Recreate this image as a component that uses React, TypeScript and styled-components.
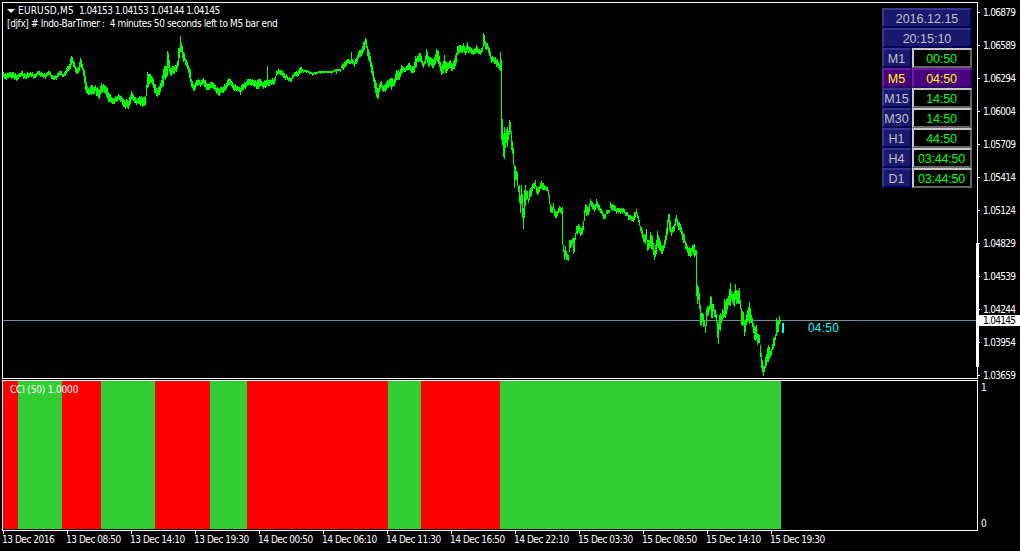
import React from "react";
import styled, { createGlobalStyle } from "styled-components";

const Global = createGlobalStyle`
  * { box-sizing: border-box; }
  html, body { margin: 0; padding: 0; background: #000; }
`;

const Terminal = styled.main`
  width: 1020px;
  height: 551px;
  padding: 2px 0 0 2px;
  display: grid;
  grid-template-columns: 976px 42px;
  grid-template-rows: 377px 151px 20px;
  row-gap: 1px;
  overflow: hidden;
  background: #000;
  color: #fff;
  font-family: "DejaVu Sans Condensed", "DejaVu Sans", sans-serif;
  font-stretch: condensed;
  font-size: 10px;
  line-height: 13px;
  letter-spacing: -0.7px;
  white-space: nowrap;
`;

const Pane = styled.section`
  position: relative;
  border: 1px solid #fff;
  overflow: hidden;
`;

const Drawing = styled.svg`
  position: absolute;
  left: -3px;
  top: -3px;
  display: block;
`;

const Header = styled.header`
  position: relative;
  padding: 1px 0 0 4px;
`;

const TitleRow = styled.div`
  display: flex;
  align-items: center;
  height: 13px;
  letter-spacing: -0.54px;
`;

const Marker = styled.span`
  width: 0;
  height: 0;
  border: 4px solid transparent;
  border-top-color: #fff;
  border-bottom: 0;
  margin-right: 3px;
`;

const Symbol = styled.span`
  width: 61px;
  letter-spacing: 0.2px;
`;

const Message = styled.div`
  height: 13px;
  letter-spacing: -0.37px;
  white-space: pre;
`;

const Countdown = styled.span`
  position: absolute;
  left: 805px;
  top: 317px;
  color: #00ffff;
  font: 12px/16px "Liberation Sans", Arial, sans-serif;
  letter-spacing: 0.2px;
`;

const TimerPanel = styled.aside`
  position: absolute;
  left: 879px;
  top: 5px;
  width: 90px;
  display: flex;
  flex-direction: column;
  font: 12.5px/16px "Liberation Sans", Arial, sans-serif;
  letter-spacing: 0;
`;

const TimerRow = styled.div`
  display: flex;
  height: 20px;
`;

type Tone = "navy" | "active" | "value";
const tones: Record<Tone, { bg: string; light: string; dark: string; text: string }> = {
  navy: { bg: "#191970", light: "#37378e", dark: "#000052", text: "#c0c0c0" },
  active: { bg: "#4b0082", light: "#691ea0", dark: "#2d0064", text: "#ffff00" },
  value: { bg: "#000", light: "#c8c8c8", dark: "#646464", text: "#00ff00" },
};

const Cell = styled.div<{ $w: number; $tone: Tone }>`
  width: ${(p) => p.$w}px;
  height: 20px;
  display: flex;
  justify-content: center;
  align-items: center;
  padding: ${(p) => (p.$w === 90 ? "1px 0 0" : "1px 1px 0 0")};
  border: 2px solid;
  border-color: ${({ $tone }) => {
    const t = tones[$tone];
    return `${t.light} ${t.dark} ${t.dark} ${t.light}`;
  }};
  background: ${(p) => tones[p.$tone].bg};
  color: ${(p) => tones[p.$tone].text};
  letter-spacing: ${(p) => (p.$w === 60 ? "-0.2px" : "0")};
`;

const PriceAxis = styled.div`
  position: relative;
  display: flex;
  flex-direction: column;
  padding-top: 4px;
`;

const AxisLabel = styled.div`
  display: flex;
  align-items: center;
  flex: none;
  height: 33px;
  padding-bottom: 20px;
  &::before {
    content: "";
    width: 2px;
    height: 1px;
    margin-right: 3px;
    background: #fff;
  }
`;

const CurrentPrice = styled.div`
  position: absolute;
  left: 1px;
  top: 313px;
  width: 41px;
  height: 11px;
  padding-left: 4px;
  line-height: 12px;
  background: #fff;
  color: #000;
`;

const RangeBar = styled.div`
  position: absolute;
  left: -2px;
  top: 241px;
  width: 3px;
  height: 124px;
  background: #fff;
`;

const Bars = styled.div`
  display: flex;
  height: 148px;
`;

const Band = styled.div<{ $w: number; $up: boolean }>`
  width: ${(p) => p.$w}px;
  background: ${(p) => (p.$up ? "#32cd32" : "#ff0000")};
`;

const IndicatorName = styled.span`
  position: absolute;
  left: 7px;
  top: 2px;
  letter-spacing: -0.18px;
`;

const IndicatorAxis = styled.div`
  display: flex;
  flex-direction: column;
  justify-content: space-between;
  padding: 1px 0 1px 3px;
`;

const TimeAxis = styled.footer`
  grid-column: 1 / 3;
  display: flex;
  margin-top: -1px;
`;

const TimeLabel = styled.div`
  width: 64px;
  flex: none;
  line-height: 12px;
  letter-spacing: -0.47px;
  &::before {
    content: "";
    display: block;
    width: 1px;
    height: 3px;
    margin: 0 0 0 1px;
    background: #fff;
  }
`;

const prices = ["1.06879", "1.06589", "1.06294", "1.06004", "1.05709", "1.05414", "1.05124", "1.04829", "1.04539", "1.04244", "1.03954", "1.03659"];

const times = [
  "13 Dec 2016", "13 Dec 08:50", "13 Dec 14:10", "13 Dec 19:30", "14 Dec 00:50", "14 Dec 06:10", "14 Dec 11:30",
  "14 Dec 16:50", "14 Dec 22:10", "15 Dec 03:30", "15 Dec 08:50", "15 Dec 14:10", "15 Dec 19:30",
];

const timers: [string, string][] = [
  ["M1", "00:50"], ["M5", "04:50"], ["M15", "14:50"], ["M30", "14:50"], ["H1", "44:50"], ["H4", "03:44:50"], ["D1", "03:44:50"],
];

const bands: [number, boolean][] = [
  [15, false], [44, true], [39, false], [54, true], [55, false], [37, true], [141, false], [33, true], [79, false], [281, true],
];

// Price envelope: "x,high,low" in chart pixels.
const envelope = `3,72,77 5,73,79 8,73,78 12,72,78 15,73,79 18,74,79 20,73,77 22,71,76 25,74,79 28,73,78 30,72,76 34,74,78
37,71,75 40,73,77 44,73,77 48,71,75 50,72,76 52,75,79 54,76,80 57,73,77 61,71,75 63,74,77 66,68,74 68,66,71 69,64,70 70,58,69
71,56,65 72,57,63 74,62,68 76,68,74 78,67,73 79,62,71 80,58,67 82,64,70 83,68,76 84,70,83 85,76,90 87,86,94 89,89,95 91,85,95
93,87,94 95,85,91 97,87,96 99,90,99 101,83,92 103,84,91 105,86,94 107,88,99 109,94,102 112,98,104 115,96,101 119,95,100
122,98,105 126,99,107 128,101,109 130,95,104 131,91,100 132,93,99 134,97,103 137,98,103 140,97,106 143,97,106 145,96,105
146,85,96 147,72,88 149,74,84 151,76,83 153,79,88 155,84,93 157,90,97 159,86,95 161,80,88 163,69,86 164,66,78 165,66,80
166,66,78 167,51,76 168,53,68 169,60,73 170,68,75 173,66,74 175,65,71 177,61,69 178,48,66 179,48,58 180,36,52 181,43,52
182,46,58 184,53,61 186,60,66 188,65,73 190,70,82 191,79,87 193,84,91 196,80,86 198,79,85 200,82,87 203,78,84 205,80,87
207,84,90 209,84,90 211,82,88 214,84,90 217,87,93 219,89,96 221,87,92 224,84,91 226,83,89 228,78,86 230,79,84 232,82,88
235,84,90 238,87,91 240,88,95 242,84,90 244,82,88 247,79,85 251,80,86 255,80,86 258,79,89 261,81,86 264,80,87 266,80,87
267,66,85 268,80,86 271,80,85 274,78,84 276,71,76 279,70,74 281,70,75 284,73,78 286,74,78 288,78,81 290,78,82 292,75,79
294,72,76 296,71,76 298,70,76 301,67,73 303,70,73 306,70,73 309,71,74 312,73,76 315,72,75 320,71,74 326,71,73 331,71,74
336,69,74 340,69,72 342,63,69 345,61,67 348,59,63 350,61,64 351,52,63 352,59,64 353,60,65 355,59,64 357,55,62 359,50,57
361,49,56 363,42,52 365,38,45 366,39,48 367,46,56 370,56,67 372,65,76 374,77,88 376,83,97 377,88,99 378,88,98 379,84,92
381,81,87 383,86,92 386,82,90 389,79,86 391,78,90 393,80,86 396,70,80 399,72,80 401,65,74 403,67,71 406,66,70 408,63,70
410,65,71 412,66,73 413,66,73 415,56,68 417,56,62 420,53,62 422,61,66 424,61,65 426,49,60 428,56,67 430,57,64 432,59,68
434,57,66 436,49,60 438,51,64 440,62,71 441,66,75 442,64,74 444,55,69 446,62,73 448,63,69 450,60,68 452,64,71 455,55,66
457,46,55 459,45,53 461,46,53 463,43,51 465,48,55 467,42,50 469,47,53 472,49,54 474,49,54 476,45,52 478,49,54 480,50,55
482,47,52 483,33,47 484,35,45 485,41,49 487,43,49 489,48,56 491,57,63 493,57,62 495,57,64 497,59,66 499,64,70 500,52,71
501,60,140 502,119,145 503,134,157 504,127,159 505,133,148 506,129,143 507,127,147 508,131,140 509,120,135 510,122,132
511,131,150 512,141,154 513,148,165 514,165,188 515,166,180 516,171,180 517,172,186 518,186,192 519,185,203 520,195,213
521,185,204 522,194,218 523,208,229 524,190,218 525,185,206 526,191,200 527,191,199 528,198,203 529,190,200 531,187,196
533,183,188 535,180,187 537,188,195 539,186,192 541,181,188 543,183,190 545,186,190 547,187,191 548,190,196 549,195,204
550,204,212 552,207,213 553,203,210 555,211,218 557,211,216 559,206,212 561,208,214 562,207,245 563,245,252 564,250,260
565,246,257 567,254,260 568,255,261 569,240,252 570,240,248 572,238,244 573,238,254 574,238,252 575,233,240 576,226,234
578,224,232 580,228,236 581,228,235 583,221,230 584,210,221 585,204,213 586,205,216 587,207,215 589,204,212 590,199,205
592,202,209 595,204,210 596,199,206 598,204,210 600,208,213 602,211,216 604,214,219 606,210,214 609,210,213 610,202,208
612,204,210 614,205,211 617,208,212 620,209,214 623,208,212 626,212,216 629,215,220 632,217,221 634,212,220 636,209,214
638,216,222 640,226,231 642,230,238 644,235,243 646,229,240 647,240,251 649,240,248 650,232,246 652,236,250 654,250,260
655,245,257 657,231,246 659,238,250 661,245,254 663,245,251 665,235,245 667,220,235 668,214,222 669,214,230 671,229,236
673,226,232 675,218,226 676,215,222 678,222,230 680,224,232 682,231,240 684,234,243 686,243,250 688,248,256 690,248,257
692,245,252 694,244,257 695,250,256 696,250,296 697,285,304 698,287,300 699,293,309 700,305,325 701,313,326 702,313,322
703,314,327 704,320,326 705,325,333 706,309,326 707,306,316 709,305,311 710,296,309 711,297,318 712,304,318 713,304,311
715,310,318 716,314,323 717,322,338 718,323,344 719,315,330 720,313,331 721,315,323 722,309,320 723,311,318 724,299,317
726,299,314 728,296,305 730,283,306 731,291,299 732,294,302 734,291,307 735,284,300 737,291,303 739,288,304 740,300,309
741,308,325 743,312,325 744,321,336 746,314,325 748,307,321 749,302,324 751,315,323 753,323,333 754,326,340 756,325,339
757,334,345 759,335,343 760,345,357 761,353,368 763,366,376 764,366,372 765,357,368 767,348,362 768,345,362 770,351,357
772,344,350 773,338,349 775,334,340 776,318,336 777,321,333 778,320,332 779,316,325 780,320,322`
  .split(/\s+/)
  .map((s) => s.split(",").map(Number));

// Fills the columns between samples and shifts each by a slight wobble.
const tracePath = (() => {
  const wobble = [0, 1, -1, 1, 0, -1, 2, -1, 0, 1];
  const parts: string[] = [];
  for (let i = 0; i < envelope.length; i++) {
    const [x, hi, lo] = envelope[i];
    parts.push(`M${x} ${hi}h1V${lo}h-1z`);
    const next = envelope[i + 1];
    if (!next) break;
    for (let c = x + 1; c < next[0]; c++) {
      const t = (c - x) / (next[0] - x);
      const quiet = c > 300 && c < 342;
      const w = quiet ? 0 : wobble[(c * 7 + (c >> 2)) % 10];
      const h = Math.round(hi + (next[1] - hi) * t) + w;
      const l = Math.round(lo + (next[2] - lo) * t) + w;
      parts.push(`M${c} ${h}h1V${quiet ? h + 2 : l}h-1z`);
    }
  }
  return parts.join("");
})();

export default function App() {
  return (
    <>
      <Global />
      <Terminal>
        <Pane>
          <Drawing width="977" height="378" viewBox="0 0 977 378" shapeRendering="crispEdges">
            <path d="M3 320H977V321H3z" fill="#778899" />
            <path d={tracePath} fill="#00ff00" />
            <path d="M782 323h2v10h-2z" fill="#00ffff" />
          </Drawing>
          <Header>
            <TitleRow>
              <Marker />
              <Symbol>EURUSD,M5</Symbol>
              <span>1.04153 1.04153 1.04144 1.04145</span>
            </TitleRow>
            <Message>{"[djfx] # Indo-BarTimer :  4 minutes 50 seconds left to M5 bar end"}</Message>
          </Header>
          <Countdown>04:50</Countdown>
          <TimerPanel>
            <Cell $w={90} $tone="navy">2016.12.15</Cell>
            <Cell $w={90} $tone="navy">20:15:10</Cell>
            {timers.map(([frame, left]) => (
              <TimerRow key={frame}>
                <Cell $w={30} $tone={frame === "M5" ? "active" : "navy"}>{frame}</Cell>
                <Cell $w={60} $tone={frame === "M5" ? "active" : "value"}>{left}</Cell>
              </TimerRow>
            ))}
          </TimerPanel>
        </Pane>
        <PriceAxis>
          {prices.map((p) => (
            <AxisLabel key={p}>{p}</AxisLabel>
          ))}
          <RangeBar />
          <CurrentPrice>1.04145</CurrentPrice>
        </PriceAxis>
        <Pane>
          <Bars>
            {bands.map(([w, up], i) => (
              <Band key={i} $w={w} $up={up} />
            ))}
          </Bars>
          <IndicatorName>CCI (50) 1.0000</IndicatorName>
        </Pane>
        <IndicatorAxis>
          <span>1</span>
          <span>0</span>
        </IndicatorAxis>
        <TimeAxis>
          {times.map((t) => (
            <TimeLabel key={t}>{t}</TimeLabel>
          ))}
        </TimeAxis>
      </Terminal>
    </>
  );
}
